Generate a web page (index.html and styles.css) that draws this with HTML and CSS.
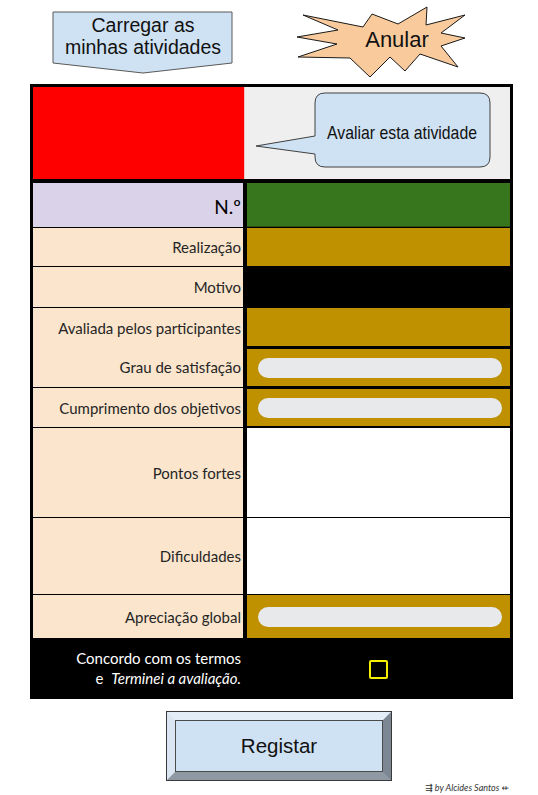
FILE: index.html
```html
<!DOCTYPE html>
<html lang="pt">
<head>
<meta charset="utf-8">
<title>Avaliar atividade</title>
<link rel="stylesheet" href="styles.css">
</head>
<body>
<div class="top">
  <svg class="load" width="190" height="84" viewBox="0 0 190 84">
    <path d="M5 12 H184 V63 L95 73 L5 63 Z" fill="#cfe2f3" stroke="#595959" stroke-width="1"/>
    <text x="95" y="32" text-anchor="middle" class="svgtxt" font-size="19.5">Carregar as</text>
    <text x="95" y="54" text-anchor="middle" class="svgtxt" font-size="19.5">minhas atividades</text>
  </svg>
  <svg class="cancel" width="180" height="84" viewBox="0 0 180 84">
    <polygon points="8,15 68,27 77,14 103,24 132,7 131,25 170,15 146,33 170,38 146,46 163,67 125,54 110,71 95,57 75,77 55,58 3,57 42,44 2,37 43,30" fill="#f9cb9c" stroke="#1a1a1a" stroke-width="1" stroke-linejoin="miter"/>
    <text x="102" y="47" text-anchor="middle" class="svgtxt" font-size="22">Anular</text>
  </svg>
</div>

<div class="sheet">
  <div class="header">
    <div class="red"></div>
    <div class="grey">
      <svg width="264" height="92" viewBox="0 0 264 92">
        <path d="M80 6 H235 Q245 6 245 16 V70 Q245 80 235 80 H80 Q70 80 70 70 V67 L11 59 L70 49 V16 Q70 6 80 6 Z" fill="#cfe2f3" stroke="#404040" stroke-width="1"/>
        <text x="157" y="52" text-anchor="middle" class="svgtxt" font-size="19" textLength="150" lengthAdjust="spacingAndGlyphs">Avaliar esta atividade</text>
      </svg>
    </div>
  </div>

  <div class="grid">
    <div class="lab lav big">N.º</div>
    <div class="val green"></div>

    <div class="lab">Realização</div>
    <div class="val brown"></div>

    <div class="lab">Motivo</div>
    <div class="val black"></div>

    <div class="lab span2">
      <div class="sub first">Avaliada pelos participantes</div>
      <div class="sub second">Grau de satisfação</div>
    </div>
    <div class="val brown"></div>
    <div class="val brown thick-top"><div class="pill"></div></div>

    <div class="lab">Cumprimento dos objetivos</div>
    <div class="val brown thin-top"><div class="pill"></div></div>

    <div class="lab">Pontos fortes</div>
    <div class="val white"></div>

    <div class="lab">Dificuldades</div>
    <div class="val white"></div>

    <div class="lab">Apreciação global</div>
    <div class="val brown"><div class="pill"></div></div>

    <div class="terms">
      <span>Concordo com os termos</span>
      <span>e&nbsp; <em>Terminei a avaliação.</em></span>
    </div>
    <div class="check-cell"><div class="check"></div></div>
  </div>
</div>

<div class="register">
  <div class="bevel">
    <div class="face">Registar</div>
  </div>
</div>

<div class="footer">⇶ by Alcides Santos ⇷</div>
</body>
</html>
```

FILE: styles.css
```css
* { box-sizing: border-box; }

html, body {
  margin: 0;
  padding: 0;
  background: #ffffff;
}

body {
  font-family: "Liberation Sans", Arial, sans-serif;
  width: 538px;
}

.svgtxt {
  font-family: "Liberation Sans", Arial, sans-serif;
  fill: #111111;
}

.top {
  display: flex;
  height: 84px;
}

.top svg { display: block; }

.load { margin-left: 48px; }
.cancel { margin-left: 57px; }

.sheet {
  margin-left: 30px;
  width: 483px;
  border: 3px solid #000;
  border-bottom: 0;
  background: #000;
}

.header {
  display: flex;
  height: 92px;
  margin-bottom: 4px;
}

.red {
  width: 212px;
  background: #ff0000;
  border-right: 1px solid #f2c4c4;
}

.grey {
  flex: 1;
  background: #efefef;
}

.grey svg { display: block; }

.grid {
  display: grid;
  grid-template-columns: 210px 263px;
  grid-template-rows: 44px 38px 40px 38px 40px 39px 89px 76px 43px 60px;
  column-gap: 4px;
  row-gap: 1px;
}

.lab {
  background: #fce5cd;
  color: #252525;
  font-family: Lato, "Open Sans", sans-serif;
  font-size: 15px;
  display: flex;
  align-items: center;
  justify-content: flex-end;
  padding-right: 2px;
  white-space: nowrap;
}

.lab.lav {
  background: #d9d2e9;
  color: #000;
}

.lab.big {
  font-size: 19px;
  padding-top: 2px;
}

.span2 {
  grid-row: span 2;
  flex-direction: column;
  align-items: stretch;
  justify-content: flex-start;
}

.sub {
  display: flex;
  align-items: center;
  justify-content: flex-end;
}

.sub.first { height: 39px; }
.sub.second { height: 40px; }

.val {
  display: flex;
  align-items: center;
}

.green {
  background: #38761d;
  border-bottom: 1px solid #2a4f17;
}

.brown { background: #bf9000; }
.black { background: #000; }
.white { background: #ffffff; }

.thick-top {
  border-top: 2px solid #000;
  border-bottom: 1px solid #000;
}

.thin-top {
  border-top: 1px solid #000;
  border-bottom: 1px solid #000;
}

.pill {
  height: 20px;
  margin-left: 11px;
  margin-right: 8px;
  flex: 1;
  border-radius: 10px;
  background: #e8e9eb;
}

.terms {
  background: #000;
  color: #ffffff;
  font-family: Lato, "Open Sans", sans-serif;
  font-size: 15px;
  line-height: 20px;
  display: flex;
  flex-direction: column;
  align-items: flex-end;
  justify-content: center;
  padding-right: 2px;
  padding-bottom: 2px;
  white-space: nowrap;
}

.terms em { font-style: italic; }

.check-cell {
  background: #000;
  display: flex;
  align-items: center;
  justify-content: center;
}

.check {
  width: 19px;
  height: 19px;
  border: 2px solid #f5f000;
  border-radius: 2px;
}

.register {
  margin-top: 12px;
  margin-left: 166px;
  width: 226px;
  height: 70px;
  border: 1px solid #3a3a3a;
}

.bevel {
  height: 100%;
  border-style: solid;
  border-width: 8px;
  border-color: #e3edf7 #7c8793 #8e99a4 #dae6f1;
}

.face {
  height: 100%;
  background: #cfe2f3;
  border: 1px solid #4a4a4a;
  display: flex;
  align-items: center;
  justify-content: center;
  font-family: "Liberation Sans", Arial, sans-serif;
  font-size: 20.5px;
  color: #111;
}

.footer {
  width: 513px;
  text-align: right;
  padding-right: 4px;
  margin-top: 1px;
  font-family: Lato, "DejaVu Sans", sans-serif;
  font-style: italic;
  font-size: 9px;
  line-height: 12px;
  color: #333;
}
```
